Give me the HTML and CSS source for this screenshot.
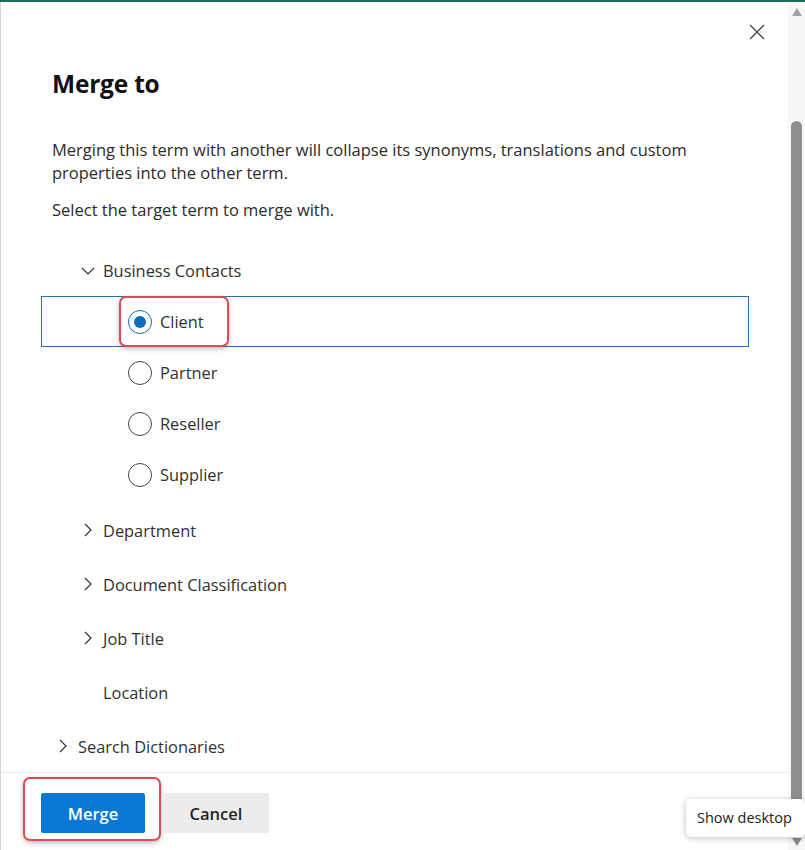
FILE: index.html
```html
<!DOCTYPE html>
<html lang="en">
<head>
<meta charset="utf-8">
<title>Merge to</title>
<link rel="stylesheet" href="styles.css">
</head>
<body>
<div class="frame">
  <div class="dialog">
    <div class="body">
      <div class="header">
        <button class="close" aria-label="Close">
          <svg width="16" height="16" viewBox="0 0 16 16"><path d="M1 1 L15 15 M15 1 L1 15" stroke="#444" stroke-width="1.3" fill="none"/></svg>
        </button>
      </div>
      <h1 class="title">Merge to</h1>
      <p class="desc">Merging this term with another will collapse its synonyms, translations and custom properties into the other term.</p>
      <p class="desc second">Select the target term to merge with.</p>

      <div class="tree">
        <div class="row lvl1 head">
          <span class="chev"><svg width="16" height="16" viewBox="0 0 16 16"><path d="M2 5 L8 11 L14 5" stroke="#333" stroke-width="1.2" fill="none"/></svg></span>
          <span class="label">Business Contacts</span>
        </div>
        <div class="children">
          <div class="row lvl2 selected">
            <span class="highlight"></span>
            <span class="radio checked"></span>
            <span class="label">Client</span>
          </div>
          <div class="row lvl2">
            <span class="radio"></span>
            <span class="label">Partner</span>
          </div>
          <div class="row lvl2">
            <span class="radio"></span>
            <span class="label">Reseller</span>
          </div>
          <div class="row lvl2">
            <span class="radio"></span>
            <span class="label">Supplier</span>
          </div>
        </div>
        <div class="row lvl1">
          <span class="chev"><svg width="16" height="16" viewBox="0 0 16 16"><path d="M5 2 L11 8 L5 14" stroke="#333" stroke-width="1.2" fill="none"/></svg></span>
          <span class="label">Department</span>
        </div>
        <div class="row lvl1">
          <span class="chev"><svg width="16" height="16" viewBox="0 0 16 16"><path d="M5 2 L11 8 L5 14" stroke="#333" stroke-width="1.2" fill="none"/></svg></span>
          <span class="label">Document Classification</span>
        </div>
        <div class="row lvl1">
          <span class="chev"><svg width="16" height="16" viewBox="0 0 16 16"><path d="M5 2 L11 8 L5 14" stroke="#333" stroke-width="1.2" fill="none"/></svg></span>
          <span class="label">Job Title</span>
        </div>
        <div class="row lvl1">
          <span class="chev"></span>
          <span class="label">Location</span>
        </div>
        <div class="row lvl0">
          <span class="chev"><svg width="16" height="16" viewBox="0 0 16 16"><path d="M5 2 L11 8 L5 14" stroke="#333" stroke-width="1.2" fill="none"/></svg></span>
          <span class="label">Search Dictionaries</span>
        </div>
      </div>
    </div>
    <div class="footer">
      <div class="btn-wrap">
        <span class="highlight btn-hl"></span>
        <button class="btn primary">Merge</button>
      </div>
      <button class="btn secondary">Cancel</button>
    </div>
  </div>
  <div class="scrollbar">
    <span class="arrow up"></span>
    <div class="track"><div class="thumb"></div></div>
    <span class="arrow down"></span>
  </div>
  <div class="tooltip">Show desktop</div>
</div>
</body>
</html>
```

FILE: styles.css
```css
* { box-sizing: border-box; }
html, body { margin: 0; padding: 0; background: #fff; }
body {
  font-family: "Open Sans", "Noto Sans", "Liberation Sans", sans-serif;
  color: #242424;
}
.frame {
  position: relative;
  width: 805px;
  height: 850px;
  display: flex;
  border-top: 2px solid #1e6b59;
  overflow: hidden;
}
.dialog {
  flex: 1;
  display: flex;
  flex-direction: column;
  border-left: 1px solid #d6d6d6;
  min-width: 0;
}
.body {
  flex: 1;
  overflow: hidden;
  min-height: 0;
}
.header {
  display: flex;
  justify-content: flex-end;
  padding: 21px 22px 0 0;
  height: 66px;
}
.close {
  width: 18px;
  height: 18px;
  padding: 0;
  border: 0;
  background: none;
  display: flex;
  align-items: center;
  justify-content: center;
}
.title {
  margin: 0 0 0 51px;
  font-size: 24.5px;
  font-weight: 700;
  line-height: 32px;
  color: #111;
  letter-spacing: -0.2px;
}
.desc {
  margin: 38px 60px 0 51px;
  font-size: 16.5px;
  line-height: 23px;
  color: #2b2b2b;
}
.desc.second { margin-top: 14px; }
.tree { margin-top: 24px; }
.row {
  position: relative;
  display: flex;
  align-items: center;
  font-size: 16.4px;
  color: #323130;
}
.row.lvl1 { height: 54px; padding-left: 78px; }
.row.lvl1.head { height: 51px; }
.row.lvl0 { height: 54px; padding-left: 53px; }
.row.lvl2 { height: 51px; padding-left: 127px; }
.children { margin-bottom: 3px; }
.chev {
  width: 17px;
  height: 16px;
  margin-right: 7px;
  display: flex;
  align-items: center;
  justify-content: center;
}
.row.selected {
  margin-left: 40px;
  margin-right: 39px;
  padding-left: 86px;
  border: 1px solid #2a6db0;
}
.radio {
  width: 24px;
  height: 24px;
  border-radius: 50%;
  border: 1px solid #444;
  margin-right: 8px;
  position: relative;
  flex: none;
  background: #fff;
}
.radio.checked { border-color: #0f6cbd; }
.radio.checked::after {
  content: "";
  position: absolute;
  left: 5px;
  top: 5px;
  width: 12px;
  height: 12px;
  border-radius: 50%;
  background: #0f6cbd;
}
.label { white-space: nowrap; }
.highlight {
  position: absolute;
  border: 2px solid #dc4a53;
  border-radius: 7px;
  box-shadow: 0 2px 5px rgba(0,0,0,0.25);
  pointer-events: none;
}
.row.selected .highlight {
  left: 77px;
  top: -1px;
  width: 110px;
  height: 51px;
  background: transparent;
}
.footer {
  height: 78px;
  border-top: 1px solid #ebebeb;
  display: flex;
  align-items: flex-start;
  padding: 20px 0 0 40px;
  gap: 18px;
}
.btn-wrap { position: relative; }
.btn-hl {
  left: -18px;
  top: -16px;
  width: 138px;
  height: 64px;
}
.btn {
  height: 40px;
  border: 0;
  border-radius: 2px;
  font-family: inherit;
  font-size: 16.5px;
  font-weight: 600;
  position: relative;
}
.btn.primary {
  width: 104px;
  background: #0a78d4;
  color: #fff;
}
.btn.secondary {
  width: 106px;
  background: #ececec;
  color: #242424;
  font-weight: 600;
}
.scrollbar {
  width: 17px;
  flex: none;
  background: #f7f7f7;
  display: flex;
  flex-direction: column;
  align-items: center;
}
.arrow {
  width: 0;
  height: 0;
  border-left: 5px solid transparent;
  border-right: 5px solid transparent;
  flex: none;
}
.arrow.up { border-bottom: 8px solid #a3a3a3; margin-top: 6px; }
.arrow.down { border-top: 8px solid #8a8a8a; margin-bottom: 4px; }
.track {
  flex: 1;
  width: 100%;
  display: flex;
  justify-content: center;
  padding-top: 105px;
  padding-bottom: 4px;
}
.thumb {
  width: 11px;
  height: 100%;
  background: #8f8f8f;
  border-radius: 6px 6px 0 0;
}
.tooltip {
  position: absolute;
  right: 0;
  top: 797px;
  width: 119px;
  height: 38px;
  background: #fff;
  border-radius: 5px;
  box-shadow: 0 1px 6px rgba(0,0,0,0.25);
  font-size: 14.5px;
  color: #222;
  padding: 9px 0 0 11px;
  white-space: nowrap;
}
```
